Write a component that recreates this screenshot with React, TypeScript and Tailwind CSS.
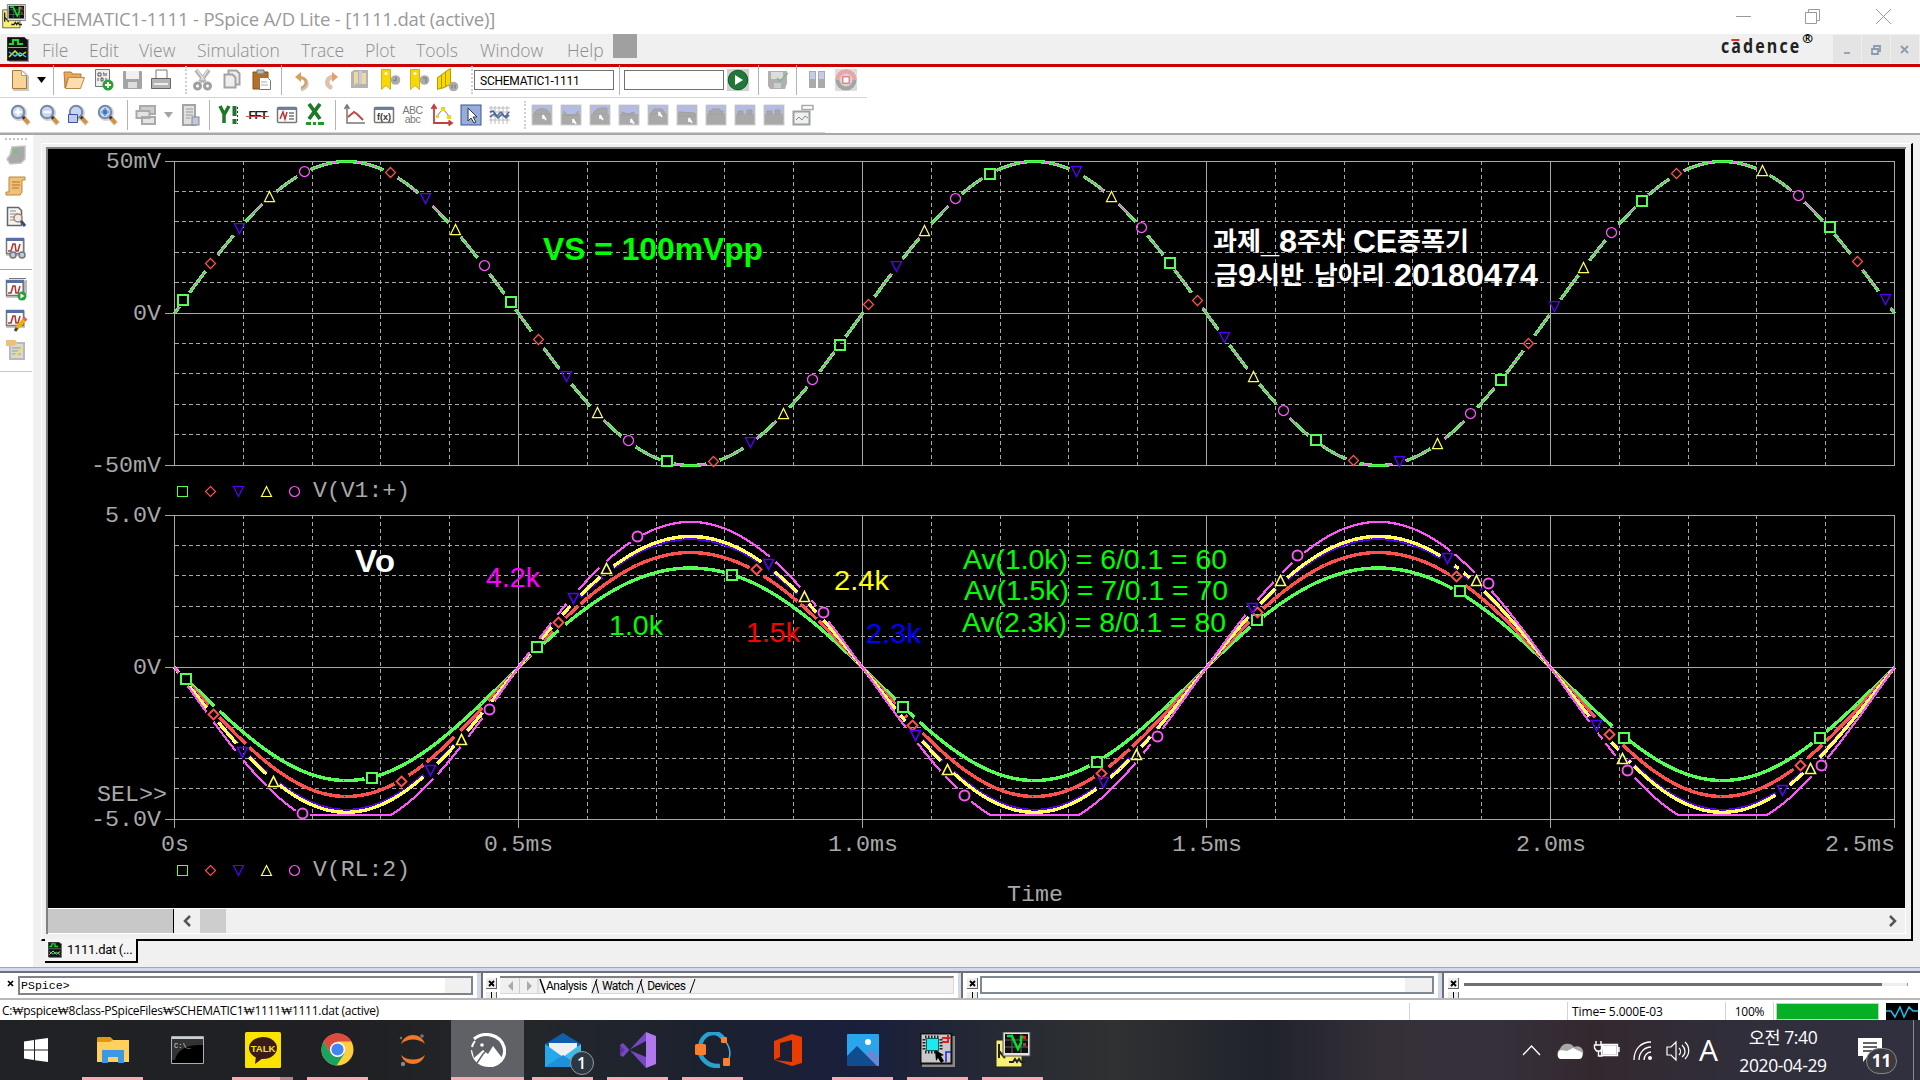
import React from "react";

type Pt = [number, number];
const GREEN = "#55ff55";
const RED = "#ff5050";
const BLUE = "#5500ff";
const YELLOW = "#ffff55";
const PINK = "#ff55ff";
const COLORS = [GREEN, RED, BLUE, YELLOW, PINK];
const X0 = 174.5;
const X1 = 1894.5;
const HALF = 172;

const phase = (x: number) => ((x - X0) / (2 * HALF)) * Math.PI;

const topY = (x: number) => 313.5 - 152 * Math.sin(phase(x));
const topXs = [
  [182.5, 510.7, 666.7, 839.6, 989.4, 1169.7, 1315, 1500.3, 1641.7, 1829],
  [210.5, 390.6, 538.2, 713.3, 868.2, 1197.8, 1353.2, 1528.3, 1676.5, 1857],
  [239, 425.4, 566.3, 750.3, 896.2, 1076.6, 1224.7, 1399.2, 1554.7, 1885.2],
  [269.4, 455.2, 597, 783, 924.9, 1111.4, 1253.9, 1437.4, 1583.3, 1762.9],
  [304.2, 484.4, 628.6, 812.6, 955.2, 1141.7, 1283.6, 1470.5, 1611.4, 1798.2],
];
const topMarks: Pt[][] = topXs.map((r) => r.map((x): Pt => [x, topY(x) - (x < 183 ? 3 : 1)]));

const botMarks: Pt[][] = [
  [[185, 678], [371, 777], [536.7, 646.7], [731, 574], [902, 706.7], [1096.3, 761.7], [1256, 619], [1459, 590], [1623, 737], [1819.7, 737]],
  [[213, 714], [401.6, 781.7], [558.4, 622.7], [756.3, 569.7], [912.2, 725.7], [1101.7, 773.3], [1257, 612], [1456.3, 576.7], [1609.7, 734.3], [1800.7, 765]],
  [[242.4, 752], [430.2, 770.3], [573.5, 598.3], [768.6, 564.3], [915.5, 735], [1103.2, 782.7], [1252.5, 608.7], [1447.3, 558.7], [1596.3, 725], [1782.3, 790]],
  [[273, 781], [461.2, 739.3], [606.5, 568.7], [804.5, 596], [947, 769], [1136.5, 754.3], [1280.4, 580.7], [1476.3, 580.7], [1622, 758], [1810.3, 768.7]],
  [[302.5, 813], [489, 709.3], [637, 536.3], [823.7, 612.7], [964.3, 795.3], [1157.6, 736.7], [1297.3, 555.3], [1488.3, 583.3], [1627.3, 770.7], [1821.3, 765.7]],
];

const outY = (up: number, down: number, clip: number) => (x: number) => {
  const s = Math.sin(phase(x));
  const a = (up + down) / 2;
  const b = (down - up) / 2;
  return 667.5 + Math.min(clip, a * s + b * s * s);
};
const outputs = [
  { y: outY(99.5, 113, 999), color: GREEN, w: 3.4 },
  { y: outY(115, 129, 999), color: RED, w: 3.4 },
  { y: outY(129, 143, 999), color: BLUE, w: 3.4 },
  { y: outY(131, 144.8, 999), color: YELLOW, w: 3.4 },
  { y: outY(145.6, 161, 147.5), color: PINK, w: 2.2 },
];

function tracePath(fn: (x: number) => number, marks: Pt[], gx: number, gy: number) {
  let d = "";
  let pen = false;
  for (let x = X0; x <= X1; x += 1) {
    const y = fn(x);
    const hidden = marks.some(([mx, my]) => Math.abs(x - mx) < gx && Math.abs(y - my) < gy);
    if (hidden) {
      pen = false;
      continue;
    }
    d += `${pen ? "L" : "M"}${x} ${y.toFixed(1)}`;
    pen = true;
  }
  return d;
}

function Marker({ kind, x, y, w = 1 }: { kind: number; x: number; y: number; w?: number }) {
  const cx = Math.round(x - 0.5) + 0.5;
  const cy = Math.round(y - 0.5) + 0.5;
  const p = { fill: "none", stroke: COLORS[kind], strokeWidth: w };
  if (kind === 0) return <rect x={cx - 5} y={cy - 5} width={10} height={10} {...p} shapeRendering="crispEdges" />;
  if (kind === 1) return <path d={`M${cx} ${cy - 5}l5 5l-5 5l-5-5z`} {...p} />;
  if (kind === 2) return <path d={`M${cx - 5} ${cy - 5}h10l-5 10z`} {...p} />;
  if (kind === 3) return <path d={`M${cx - 5} ${cy + 5}h10l-5-10z`} {...p} />;
  return <circle cx={cx} cy={cy} r={5} {...p} />;
}

function Grid({ top, ticks }: { top: number; ticks?: boolean }) {
  const out: React.ReactElement[] = [];
  for (let i = 0; i <= 25; i++) {
    const x = Math.floor(X0 + i * 68.8) + 0.5;
    const major = i % 5 === 0;
    out.push(<path key={`v${i}`} d={`M${x} ${top}V${top + 304 + (ticks && major ? 9 : 0)}`} strokeDasharray={major ? undefined : "4 3"} />);
  }
  for (let j = 0; j <= 10; j++) {
    const y = Math.floor(top + j * 30.4) + 0.5;
    const major = j % 5 === 0;
    out.push(<path key={`h${j}`} d={`M${major ? 165 : X0} ${y}H${X1}`} strokeDasharray={major ? undefined : "4 3"} />);
  }
  return <g stroke="#a8a8a8" fill="none" shapeRendering="crispEdges">{out}</g>;
}

function T({ x, e, y, s, c, b, children }: { x: number; e: number; y: number; s: number; c?: string; b?: boolean; children: string }) {
  return (
    <text x={x} y={y} fontSize={s} fill={c ?? "#a8a8a8"} fontWeight={b ? 700 : 400} textLength={e - x} lengthAdjust="spacingAndGlyphs">
      {children}
    </text>
  );
}

function Chart() {
  const allTop = topMarks.flat();
  const allBot = botMarks.flat();
  const topD = tracePath(topY, allTop, 6.2, 7);
  return (
    <svg viewBox="48 149 1857 759" className="block h-[759px] w-[1857px] bg-black">
      <Grid top={161} />
      <Grid top={515} ticks />
      <g fill="none" shapeRendering="crispEdges">
        <path d={topD} stroke={GREEN} strokeWidth={3.4} />
        <path d={topD} stroke="#e070e0" strokeWidth={1} />
        {outputs.map((o, i) => (
          <path key={i} d={tracePath(o.y, allBot, 6.5, 7.5)} stroke={o.color} strokeWidth={o.w} />
        ))}
      </g>
      {topMarks.map((r, k) => r.map(([x, y], i) => <Marker key={`${k}-${i}`} kind={k} x={x} y={y} w={k === 0 ? 2 : 1.25} />))}
      {botMarks.map((r, k) => r.map(([x, y], i) => <Marker key={`${k}-${i}`} kind={k} x={x} y={y} w={k === 0 ? 2 : k === 1 || k === 4 ? 1.9 : 1.6} />))}
      {[491, 870].map((y) => [0, 1, 2, 3, 4].map((k) => <Marker key={`${y}${k}`} kind={k} x={182.5 + k * 28} y={y + 0.5} w={k === 0 ? 1 : 1.2} />))}
      <g fontFamily="'Liberation Mono', monospace">
        <T x={106} e={161} y={168} s={22.5}>50mV</T>
        <T x={133} e={161} y={320} s={22.5}>0V</T>
        <T x={91} e={161} y={472} s={22.5}>-50mV</T>
        <T x={105} e={161} y={522} s={22.5}>5.0V</T>
        <T x={133} e={161} y={674} s={22.5}>0V</T>
        <T x={97} e={167} y={801} s={22.5}>SEL&gt;&gt;</T>
        <T x={91} e={161} y={826} s={22.5}>-5.0V</T>
        <T x={161} e={189} y={851} s={22.5}>0s</T>
        <T x={484} e={553} y={851} s={22.5}>0.5ms</T>
        <T x={828} e={898} y={851} s={22.5}>1.0ms</T>
        <T x={1172} e={1242} y={851} s={22.5}>1.5ms</T>
        <T x={1516} e={1586} y={851} s={22.5}>2.0ms</T>
        <T x={1825} e={1895} y={851} s={22.5}>2.5ms</T>
        <T x={313} e={410} y={497} s={22.5}>V(V1:+)</T>
        <T x={313} e={410} y={876} s={22.5}>V(RL:2)</T>
        <T x={1007} e={1063} y={901} s={22.5}>Time</T>
      </g>
      <g fontFamily="'Liberation Sans', sans-serif">
        <T x={543} e={763} y={260} s={32} c="#00ff00" b>VS = 100mVpp</T>
        <T x={1261} e={1297} y={252} s={31} c="#fff" b>_8</T>
        <T x={1353} e={1397} y={252} s={31} c="#fff" b>CE</T>
        <T x={1238} e={1256} y={286} s={31} c="#fff" b>9</T>
        <T x={1394} e={1538} y={286} s={31} c="#fff" b>20180474</T>
        <T x={355} e={395} y={572} s={31} c="#fff" b>Vo</T>
        <T x={486} e={540} y={587} s={28} c="#ff00ff">4.2k</T>
        <T x={834} e={889} y={590} s={28} c="#ffff00">2.4k</T>
        <T x={609} e={663} y={635} s={28} c="#00ff00">1.0k</T>
        <T x={746} e={800} y={642} s={28} c="#ff0000">1.5k</T>
        <T x={866} e={921} y={643} s={28} c="#0000ff">2.3k</T>
        <T x={963} e={1227} y={569} s={28} c="#00ff00">Av(1.0k) = 6/0.1 = 60</T>
        <T x={964} e={1228} y={600} s={28} c="#00ff00">Av(1.5k) = 7/0.1 = 70</T>
        <T x={962} e={1226} y={632} s={28} c="#00ff00">Av(2.3k) = 8/0.1 = 80</T>
      </g>
      <g fontFamily="'Noto Sans CJK KR', sans-serif">
        <T x={1213} e={1261} y={250} s={25} c="#fff" b>과제</T>
        <T x={1297} e={1345} y={250} s={25} c="#fff" b>주차</T>
        <T x={1397} e={1469} y={250} s={25} c="#fff" b>증폭기</T>
        <T x={1214} e={1238} y={284} s={25} c="#fff" b>금</T>
        <T x={1256} e={1304} y={284} s={25} c="#fff" b>시반</T>
        <T x={1314} e={1385} y={284} s={25} c="#fff" b>남아리</T>
      </g>
    </svg>
  );
}

/* ---------- toolbar icons, drawn on a 24x24 canvas ---------- */
function Ico({ children, w = "w-[29px]" }: { children: React.ReactNode; w?: string }) {
  return (
    <div className={`${w} flex shrink-0 items-center justify-center`}>
      <svg viewBox="0 0 24 24" className="h-6 w-6 shrink-0" fill="none">
        {children}
      </svg>
    </div>
  );
}
const Sep = ({ w }: { w: string }) => (
  <div className={`${w} flex shrink-0 justify-center`}>
    <div className="h-[30px] w-px bg-[#b4b4b4]" />
  </div>
);
const Dots = ({ w }: { w: string }) => (
  <div className={`${w} flex shrink-0 justify-end pr-px`}>
    <div className="h-[28px] border-l-2 border-dotted border-[#d0d0d0]" />
  </div>
);
const Caret = ({ c }: { c: string }) => (
  <div className="flex w-[14px] shrink-0 justify-center">
    <svg viewBox="0 0 9 6" className="h-[6px] w-[9px]"><path d="M0 0h9L4.500 6z" fill={c} /></svg>
  </div>
);

const Lens = ({ inner }: { inner?: React.ReactNode }) => (
  <Ico>
    <circle cx="10" cy="10" r="8" fill="#d4d4d4" />
    <path d="M13 13l7 8" stroke="#c8c8c8" strokeWidth="5" />
    <path d="M13.500 13.500l6 6.500" stroke="#d89030" strokeWidth="3.500" />
    <path d="M12.500 12.500l3 3" stroke="#334" strokeWidth="3" />
    <circle cx="9" cy="9" r="6.200" fill="#c4d8f4" stroke="#7888a4" strokeWidth="2" />
    {inner}
  </Ico>
);
const Bookmark = ({ kind }: { kind: number }) => (
  <Ico>
    {kind < 2 ? (
      <>
        <path d="M4.500 1.500h9v20L9 17.500l-4.500 4z" fill="#f8d800" stroke="#c8b030" />
        <circle cx="9" cy="5.500" r="1.500" fill="#fff" />
      </>
    ) : (
      <>
        <path d="M2.500 9.500l5-3v13l-5 2z" fill="#f8d800" stroke="#b89800" />
        <path d="M6.500 6.500l5-3v15l-5 2z" fill="#f8d800" stroke="#b89800" />
        <path d="M10.500 3.500l5-3v16l-5 2z" fill="#f8d800" stroke="#b89800" />
      </>
    )}
    <circle cx="18.500" cy={kind === 2 ? 18.500 : 12} r="4.800" fill="#acacac" />
    <path d={kind === 0 ? "M19 9v3.500h-3" : kind === 1 ? "M17 10h3v5" : "M17 16.500v4M20 16.500v4"} stroke="#888" strokeWidth="1.500" />
  </Ico>
);
const Plotbox = ({ d, cur }: { d: string; cur?: Pt }) => (
  <Ico>
    <rect x="1.500" y="1.500" width="21" height="21" fill="#d0d0d0" />
    <rect x="2.500" y="2.500" width="19" height="19" fill="#a9a9a9" />
    <path d="M3 3h18v8H3z" fill="#b4bce4" />
    <path d={d} fill="#a9a9a9" stroke="#a0a0a0" />
    {cur && <path d={`M${cur[0]} ${cur[1]}l3 5M${cur[0]} ${cur[1]}v4`} stroke="#fff" strokeWidth="1.600" />}
  </Ico>
);
const Card = ({ children }: { children: React.ReactNode }) => (
  <Ico>
    <rect x="2.500" y="4.500" width="19" height="15" rx="1" fill="#fff" stroke="#777" strokeWidth="1.500" />
    <path d="M3 6h18" stroke="#6b80b0" strokeWidth="2" />
    {children}
  </Ico>
);

function Toolbars() {
  return (
    <div className="h-[66px] w-full bg-white">
      <div className="flex h-[31px] w-[867px] items-center border-b border-[#d4d4d4] pb-[5px] pl-[5px]">
        <Ico><path d="M5 3h11l5 5v15H5z" fill="#c8c8c8" /><path d="M4.500 2.500h9l5 5v13h-14z" fill="#f8d498" stroke="#a87838" /><path d="M13.500 2.500v5h5" fill="#fff" stroke="#c89850" /></Ico>
        <Caret c="#000" />
        <Sep w="w-[11px]" />
        <Ico><path d="M2 4h7l2 2h8v4H6L3 20z" fill="#e8a858" stroke="#b87838" /><path d="M6.500 9.500h16l-4 11h-15z" fill="#fddcb0" stroke="#b88848" /></Ico>
        <Ico><path d="M4.500 1.500h14v17h-14z" fill="#eee" stroke="#777" /><path d="M7 5h3v3H7zM12 5h1v3M15 5v3M7 10v3M10 10h2v3h-2zM15 10v3" stroke="#555" /><circle cx="17" cy="17" r="5.500" fill="#28a038" /><path d="M17 14v6M14 17h6" stroke="#fff" strokeWidth="1.800" /></Ico>
        <Ico><rect x="3" y="3" width="19" height="18" rx="1" fill="#a4a4a4" /><path d="M6 3h13v8H6z" fill="#f0f0f0" /><path d="M8 14h9v6H8z" fill="#ddd" /></Ico>
        <Ico><path d="M7 2h11v9H7z" fill="#fff" stroke="#777" /><path d="M2.500 10.500h19v10h-19z" fill="#b4b4b4" stroke="#666" /><path d="M5 16h14" stroke="#eee" strokeWidth="2" /></Ico>
        <Dots w="w-[13px]" />
        <Ico><path d="M5 2l9 12M18 2l-9 12" stroke="#b4b4b4" strokeWidth="4" /><path d="M6 2l7 10M17 2l-7 10" stroke="#e8e8e8" strokeWidth="1.200" /><circle cx="6.500" cy="18" r="3" stroke="#a0a0a0" strokeWidth="3" /><circle cx="16.500" cy="18" r="3" stroke="#a0a0a0" strokeWidth="3" /></Ico>
        <Ico><path d="M8.500 2.500h8l3 3v11h-11z" fill="#eee" stroke="#a4a4a4" strokeWidth="2" /><path d="M4.500 6.500h8l3 3v10h-11z" fill="#eee" stroke="#a4a4a4" strokeWidth="2" /></Ico>
        <Ico><path d="M4 4h15v17H4z" fill="#b87020" stroke="#855018" /><path d="M8 2h7v4H8z" fill="#bbb" stroke="#777" /><path d="M10.500 9.500h8l3 3v9h-11z" fill="#fff" stroke="#777" /><path d="M12 14h6M12 17h7" stroke="#aaa" /></Ico>
        <Sep w="w-[12px]" />
        <Ico><path d="M11 22c9-3 8-12-2-12" stroke="#c8c8c8" strokeWidth="3" /><path d="M11 20c7-3 6-10-1-11" stroke="#d8a060" strokeWidth="2.500" /><path d="M11 4v10L5 9z" fill="#d8a060" /></Ico>
        <Ico><path d="M13 20c-7-3-6-10 1-11" stroke="#c8c8c8" strokeWidth="4.500" /><path d="M13 20c-7-3-6-10 1-11" stroke="#ecc090" strokeWidth="2.500" /><path d="M13 4v10l6-5z" fill="#e0a070" /></Ico>
        <Ico><path d="M3 4l3-2h14v18H3z" fill="#b4b4b4" /><path d="M6 4h4v12l-2-1-2 3zM14 5h4v11h-4z" fill="#f0d8a0" /><path d="M11 3h3v13h-3z" fill="#c4cce0" /></Ico>
        <Bookmark kind={0} />
        <Bookmark kind={1} />
        <Bookmark kind={2} />
        <Dots w="w-[13px]" />
        <div className="flex h-5 w-[140px] shrink-0 items-center border border-[#707070] pl-[5px] pt-[2px] font-['Roboto'] text-[12px] tracking-[-0.25px] text-black">SCHEMATIC1-1111</div>
        <Sep w="w-[10px]" />
        <div className="h-5 w-[100px] shrink-0 border border-[#707070]" />
        <Ico w="w-[28px]"><rect x="1" y="1" width="22" height="22" fill="#d0d0d0" /><circle cx="12" cy="12" r="9.800" fill="#207838" stroke="#145828" /><path d="M9 7l8 5-8 5z" fill="#fff" /></Ico>
        <Sep w="w-[12px]" />
        <Ico w="w-[27px]"><path d="M2 3h19v12l-2 6H4l-2-3z" fill="#b0b0b0" /><path d="M5 4h12v7H5z" fill="#ddd" /><path d="M8 15h7v5H8z" fill="#ccc" /><path d="M11 10l3 3 8-8" stroke="#80b880" strokeWidth="1.400" /></Ico>
        <Sep w="w-[11px]" />
        <Ico><path d="M4 3h7v17H4zM13 3h7v17h-7z" fill="#aaa" /><path d="M5 4h5v7H5zM14 4h5v7h-5z" fill="#c4cce8" /></Ico>
        <Ico><rect x="1" y="1" width="22" height="22" fill="#ddd" /><circle cx="12" cy="12" r="10.500" fill="#a4a4a4" /><path d="M1.500 12a10.500 10.500 0 0121 0z" fill="#eca4a4" /><circle cx="12" cy="12" r="6.500" fill="#d4d4d4" /><rect x="8" y="8" width="8" height="8" fill="#e08888" /><rect x="9.500" y="9.500" width="5" height="5" fill="#fff" /></Ico>
      </div>
      <div className="flex h-[35px] w-[825px] items-center border-b border-[#d4d4d4] pl-[6px]">
        <Lens inner={<path d="M9 5.500v7M5.500 9h7" stroke="#fff" strokeWidth="2.400" />} />
        <Lens inner={<path d="M5.500 9h7" stroke="#fff" strokeWidth="2.400" />} />
        <Lens inner={<path d="M1.500 11.500h9v8h-9z" stroke="#4050a0" fill="#c0ccec" />} />
        <Lens inner={<path d="M9 5v8M5 9h8M7 7l4 4M11 7l-4 4" stroke="#3878b8" strokeWidth="1.200" />} />
        <Sep w="w-[10px]" />
        <Ico><path d="M5 3h15v8H5z" fill="#ccc" stroke="#aaa" strokeWidth="2" /><path d="M1.500 8h13v7h-13zM7 14h13v7H7z" fill="#e4e4e4" stroke="#aaa" strokeWidth="2" /></Ico>
        <Caret c="#a4a4a4" />
        <Ico><path d="M5 2h12v20H5z" fill="#e0e0e0" stroke="#a4a4a4" strokeWidth="2" /><path d="M8 6h7M8 9h7M8 12h7M8 15h4" stroke="#999" /><rect x="14" y="14" width="7" height="8" fill="#c0c8e0" stroke="#888" /></Ico>
        <Sep w="w-[10px]" />
        <Ico><path d="M3 3l4 8v9M12 3L7 12" stroke="#1d7a26" strokeWidth="3.500" /><path d="M17.500 3v10M17.500 16v5" stroke="#1d7a26" strokeWidth="4" /><path d="M20.500 4v17" stroke="#333" strokeDasharray="2 2" /></Ico>
        <div className="flex w-[29px] shrink-0 justify-center font-['Liberation_Sans'] text-[11.500px] font-bold tracking-[-1px] text-[#222]"><span className="relative leading-[11px]">FFT<span className="absolute -left-[2px] top-[6px] h-px w-[23px] bg-[#c05050]" /></span></div>
        <Card><path d="M5 16l3-7 2 7 2-7" stroke="#c03030" strokeWidth="1.500" /><path d="M14 10h5M14 13h5M14 16h5" stroke="#333" /></Card>
        <Ico><path d="M5 1l11 15M16 1L5 16" stroke="#1d7a26" strokeWidth="3.800" /><path d="M2 20.500h5M9 20.500h3M14 20.500h6" stroke="#1d9a26" strokeWidth="3" /></Ico>
        <Sep w="w-[10px]" />
        <Ico><path d="M4 2v18h18M1.500 6L4 2l2.500 4" stroke="#777" strokeWidth="1.500" /><path d="M5 14l6-5 3 2 6 6" stroke="#c04848" strokeWidth="2" /></Ico>
        <Card><text x="5" y="17" fontSize="9" fontWeight="700" fill="#333" fontFamily="Liberation Sans">f(x)</text></Card>
        <div className="w-[29px] shrink-0 text-center font-['Liberation_Sans'] text-[10.500px] leading-[9px] tracking-[-0.5px] text-[#777]">ABC<br />abc</div>
        <Ico><path d="M4 3v17h18M1.500 6L4 2l2.500 4M18.500 17.500L22 20l-3.500 2.500" stroke="#c04040" strokeWidth="1.800" /><path d="M6 14l7-8 7 8" stroke="#777" /><path d="M11 4h4v4h-4zM6 12h3v3H6zM17 12h4v4h-4z" fill="#f0d800" /></Ico>
        <Ico><rect x="2" y="2" width="20" height="20" fill="#98acdc" stroke="#3c5490" /><path d="M9 5v13l3-3 3 5 2-1-3-5h4z" fill="#fff" stroke="#334" /></Ico>
        <Ico><path d="M3 3v18M7 3v18M11 3v18M15 3v18M19 3v18M1 5h21M1 9h21M1 13h21M1 17h21" stroke="#bbb" /><path d="M2 9l3-1 4 5 4-4 4 5 4-5M2 14l4-3 4 4 4-4 4 4 3-3" stroke="#4868a0" strokeWidth="1.500" /></Ico>
        <Dots w="w-[13px]" />
        <Plotbox d="M4 11c2-7 14-7 16 0z" cur={[13, 12]} />
        <Plotbox d="M5 8c2 6 12 6 14 0v4H5z" cur={[14, 16]} />
        <Plotbox d="M5 11c3-7 9-6 14-6v6z" cur={[12, 12]} />
        <Plotbox d="M5 9l6 2 6-2v3H5z" cur={[14, 16]} />
        <Plotbox d="M4 11l4-5h8l4 5z" cur={[13, 9]} />
        <Plotbox d="M4 9l16 1v3H4z" cur={[14, 15]} />
        <Plotbox d="M5 11V8h3V6h8v2h3v3z" />
        <Plotbox d="M5 11V8h5v3zM14 11V7h5v4z" />
        <Plotbox d="M5 11V8h5v3zM13 11V7h5v4z" />
        <Ico><rect x="2.500" y="8.500" width="16" height="13" fill="#f0f0f0" stroke="#a0a0a0" strokeWidth="2" /><path d="M11 2.500h11v4H11z" fill="#fff" stroke="#aaa" strokeWidth="1.500" /><path d="M5 17l3-3 3 3 3-4 3 2" stroke="#70a070" /></Ico>
      </div>
    </div>
  );
}

const MiniPlot = ({ children }: { children: React.ReactNode }) => (
  <Ico>
    <rect x="2" y="3" width="19" height="17" fill="#c8c8c8" />
    <rect x="2.500" y="2.500" width="17" height="15" fill="#fff" stroke="#777" strokeWidth="1.500" />
    <path d="M2 3.500h18" stroke="#5870a0" strokeWidth="3" />
    <path d="M4 15h3l2-7h2l1 7h2l2-7" stroke="#b03838" strokeWidth="1.600" />
    {children}
  </Ico>
);

function SideBar() {
  return (
    <div className="flex w-[33px] shrink-0 flex-col items-center bg-white pr-[2px] pt-[3px]">
      <div className="w-[22px] border-t-2 border-dotted border-[#c4c4c4]" />
      <div className="mt-[3px] flex flex-col gap-[7px]">
        <Ico><path d="M8 4l13-1v13l-4 4-11 1-3-5 3-4z" fill="#a8a8a8" stroke="#c4c4c4" strokeWidth="1.500" /><path d="M10 10l3-3" stroke="#60d060" strokeWidth="2" /></Ico>
        <Ico><path d="M5 3h16v3h-3v12l-2 3H2v-3h3z" fill="#f0c078" stroke="#b88838" /><path d="M8 8h8M8 11h8M8 14h7" stroke="#a87830" /></Ico>
        <Ico><path d="M3.500 2.500h11l3 3v15h-14z" fill="#f4f4f4" stroke="#666" strokeWidth="1.500" /><path d="M6 6h6M6 9h8M6 12h5M6 15h6" stroke="#888" /><circle cx="14" cy="13" r="4" fill="#e0ecf8" stroke="#c08048" strokeWidth="1.500" /><path d="M17 16l4 5" stroke="#38507a" strokeWidth="3" /></Ico>
        <MiniPlot><circle cx="9" cy="19" r="3" fill="#b8c8e8" stroke="#777" strokeWidth="1.500" /><circle cx="18" cy="19" r="3" fill="#b8c8e8" stroke="#777" strokeWidth="1.500" /></MiniPlot>
      </div>
      <div className="mt-[9px] h-px w-[32px] bg-[#a8a8a8]" />
      <div className="mt-[8px] flex flex-col gap-[6px]">
        <MiniPlot><path d="M19 4v14M22 2v14M5 .5h17" stroke="#777" /><circle cx="18" cy="18" r="4.500" fill="#28a038" /><path d="M16.500 15.500l4 2.500-4 2.500z" fill="#fff" /></MiniPlot>
        <MiniPlot><path d="M12 21l9-10" stroke="#f0b000" strokeWidth="4" /><path d="M11 23l2-3" stroke="#444" strokeWidth="3" /><path d="M20 12l2-2" stroke="#e06060" strokeWidth="4" /></MiniPlot>
        <Ico><path d="M6 5h14v16H6z" fill="#d8d8d8" stroke="#b8b8b8" strokeWidth="2" /><path d="M2 2h9l3 3-4 3H2z" fill="#f0c078" /><path d="M8 10h9M8 13h8M8 16h9" stroke="#999" /><path d="M11 18l8-9" stroke="#f0e060" strokeWidth="2" /></Ico>
      </div>
      <div className="mt-[9px] h-px w-[33px] bg-[#c8c8c8]" />
    </div>
  );
}

function AppIcon({ cls }: { cls: string }) {
  return (
    <svg viewBox="0 0 36 36" className={cls}>
      <path d="M1 8h26v27H1z" fill="#f8f070" stroke="#222" />
      <path d="M4 12v14M4 19l6 7M14 30h4l2-3 2 3 2-3 2 3h4" stroke="#222" strokeWidth="2" fill="none" />
      <path d="M8 0h27v24H8z" fill="#e4e4e4" stroke="#555" />
      <path d="M10 2h23v19H10z" fill="#111" />
      <path d="M10 8h23M10 15h23M17 2v19M26 2v19" stroke="#666" />
      <path d="M12 4h5l3 7 3 6 3-6V5h3" stroke="#00e030" strokeWidth="2.500" fill="none" />
      <path d="M28 4h3v3h-3zM28 11h3v3h-3z" fill="#f02020" />
    </svg>
  );
}
const DocIcon = ({ cls }: { cls: string }) => (
  <svg viewBox="0 0 22 25" className={cls}>
    <path d="M2 2h20v23H2z" fill="#999" />
    <path d="M.5.5h17l3 3v20H.5z" fill="#111" stroke="#333" />
    <path d="M2 7h4V3h5v4h5" stroke="#10e030" strokeWidth="2" fill="none" />
    <path d="M1 10.500h19" stroke="#999" />
    <path d="M2 20l6-6 5 5 6-4" stroke="#f0e020" strokeWidth="1.500" fill="none" />
    <path d="M2 15l6 4 5-3 6 4" stroke="#20d0f0" strokeWidth="1.500" fill="none" />
  </svg>
);

function Header() {
  const menu: [string, string][] = [
    ["File", "w-[47px]"], ["Edit", "w-[50px]"], ["View", "w-[58px]"], ["Simulation", "w-[104px]"], ["Trace", "w-[64px]"],
    ["Plot", "w-[51px]"], ["Tools", "w-[64px]"], ["Window", "w-[87px]"], ["Help", "w-[47px]"],
  ];
  return (
    <>
      <div className="flex h-[34px] items-center bg-white">
        <AppIcon cls="ml-[2px] -mt-[2px] h-[25px] w-[24px]" />
        <span className="ml-[5px] mt-[3px] w-[470px] whitespace-nowrap font-['Open_Sans'] text-[18.500px] tracking-[-0.170px] text-[#999]">SCHEMATIC1-1111 - PSpice A/D Lite - [1111.dat (active)]</span>
        <svg viewBox="0 0 160 20" className="ml-auto mr-[26px] h-5 w-[160px]" fill="none" stroke="#999">
          <path d="M2 9.500h15M71.500 5.500h11v11h-11zM74.500 5V2.500h11v11H83M142 2l15 15M157 2l-15 15" />
        </svg>
      </div>
      <div className="flex h-[30px] items-center bg-[#f0f0f0]">
        <DocIcon cls="ml-[7px] mr-[13px] h-[25px] w-[22px]" />
        {menu.map(([m, w]) => (
          <span key={m} className={`${w} shrink-0 whitespace-nowrap pt-[2px] font-['Open_Sans'] text-[17.500px] font-light text-[#8c8c8c]`}>{m}</span>
        ))}
        <div className="-mt-[6px] ml-[-1px] h-[24px] w-[24px] bg-[#a0a0a0]" />
        <div className="ml-auto flex h-full items-start">
          <div className="mt-[-3px] whitespace-nowrap font-['Open_Sans'] text-[20px] font-bold tracking-[2.6px] text-[#222]">
            <span className="inline-block origin-left scale-x-[0.8]">c<span className="relative">a<span className="absolute left-[0px] top-[7px] h-[2px] w-[10px] bg-[#e03030]" /></span>dence</span>
          </div>
          <span className="-ml-[19px] mr-[20px] mt-[-5px] font-['Open_Sans'] text-[13px] font-bold text-black">®</span>
          {["M3 10h6", "M2 6h6v5H2zM4 6V3h6v5H8", "M2 3l7 7M9 3l-7 7"].map((d) => (
            <div key={d} className="mr-px mt-px flex h-7 w-7 items-center justify-center bg-[#e4e4e4]">
              <svg viewBox="0 0 12 12" className="h-3 w-3" fill="none" stroke="#8c9cb0" strokeWidth="1.800"><path d={d} /></svg>
            </div>
          ))}
        </div>
      </div>
      <div className="h-[3px] bg-[#cc0000]" />
    </>
  );
}

function MdiArea() {
  return (
    <div className="flex h-[834px] border-t-2 border-[#a8a8a8]">
      <SideBar />
      <div className="flex flex-1 flex-col bg-[#f0f0f0] pl-[8px] pt-[8px]">
        <div className="flex h-[798px] w-[1872px] flex-col border-b-2 border-l border-r-2 border-t border-b-black border-l-white border-r-black border-t-white pl-[4px] pt-[3px]">
          <div className="flex w-[1860px] flex-col border-l-2 border-t-2 border-[#808080]">
            <Chart />
            <div className="flex h-[26px] w-[1858px] items-stretch border-b border-r border-t border-white">
              <div className="w-[125px] bg-[#c8c8c8]" />
              <div className="w-px bg-black" />
              <div className="flex w-[26px] items-center justify-center">
                <svg viewBox="0 0 10 12" className="h-3 w-[10px]" fill="none" stroke="#555" strokeWidth="2.500"><path d="M8 1L3 6l5 5" /></svg>
              </div>
              <div className="w-[26px] bg-[#cdcdcd]" />
              <div className="ml-auto flex w-[24px] items-center justify-center">
                <svg viewBox="0 0 10 12" className="h-3 w-[10px]" fill="none" stroke="#555" strokeWidth="2.500"><path d="M2 1l5 5-5 5" /></svg>
              </div>
            </div>
          </div>
        </div>
        <div className="-mt-[2px] ml-[4px] flex h-[24px] w-[93px] items-center border-b-2 border-r-2 border-black bg-[#f4f4f4] pl-[3px]">
          <DocIcon cls="h-[16px] w-[14px]" />
          <span className="ml-[5px] whitespace-nowrap font-['Roboto'] text-[13px] tracking-[-0.3px] text-black">1111.dat (...</span>
        </div>
      </div>
    </div>
  );
}

const CloseBox = () => (
  <div className="flex w-[11px] shrink-0 flex-col gap-[3px] pt-[5px]">
    <div className="flex h-[11px] items-center justify-center border-b border-r border-[#666] bg-[#eee]">
      <svg viewBox="0 0 7 7" className="h-[7px] w-[7px]" stroke="#000" strokeWidth="1.800"><path d="M1 1l5 5M6 1L1 6" /></svg>
    </div>
    <div className="flex h-[6px] justify-center border-r border-[#666] bg-[#eee]"><div className="h-full w-px bg-black" /></div>
  </div>
);
const Split = ({ w }: { w: string }) => <div className={`${w} shrink-0 border-r-2 border-[#707070] bg-[#d0d8ec]`} />;

function Docks() {
  return (
    <>
      <div className="h-[5px] border-b-2 border-[#707070] bg-[#d0d8ec]" />
      <div className="flex h-[25px] overflow-hidden bg-white">
        <div className="flex w-[477px] shrink-0 items-start">
          <svg viewBox="0 0 7 7" className="ml-[7px] mr-[4px] mt-[7px] h-[7px] w-[7px]" stroke="#000" strokeWidth="1.700"><path d="M1 1l5 5M6 1L1 6" /></svg>
          <div className="mt-[3px] flex h-[19px] w-[455px] items-center justify-between border-2 border-[#808488] pl-[1px] font-['Liberation_Mono'] text-[11.600px] text-black">
            PSpice&gt;<div className="h-[15px] w-[26px] bg-[#f0f0f0]" />
          </div>
        </div>
        <Split w="w-[6px]" />
        <div className="flex w-[475px] shrink-0 pl-[3px]">
          <CloseBox />
          <div className="ml-[3px] mt-[3px] flex h-[18px] w-[454px] items-center border-b border-r border-t-2 border-[#d8d8d8] border-t-[#808080] bg-[#f0f0f0]">
            <svg viewBox="0 0 54 16" className="h-[16px] w-[54px] shrink-0"><path d="M13 3v10L8 8zM27 3v10l5-5z" fill="#aaa" /><path d="M19.500 0v16M38 0v16" stroke="#ccc" /><path d="M40 1l5 14h9V1z" fill="#fff" /><path d="M40 1l5 14" stroke="#000" strokeWidth="1.500" /></svg>
            <div className="-ml-[8px] flex items-center font-['Roboto'] text-[12px] tracking-[-0.5px] text-black">
              <span className="h-[16px] bg-white pr-[4px] leading-[17px]">Analysis</span>
              <svg viewBox="0 0 8 16" className="h-4 w-2" stroke="#000" fill="none"><path d="M1 15L6 1M4.500 3l3 12" /></svg>
              <span className="mx-[3px]">Watch</span>
              <svg viewBox="0 0 8 16" className="h-4 w-2" stroke="#000" fill="none"><path d="M1 15L6 1M4.500 3l3 12" /></svg>
              <span className="mx-[3px]">Devices</span>
              <svg viewBox="0 0 8 16" className="h-4 w-2" stroke="#000" fill="none"><path d="M2 15L7 1" /></svg>
            </div>
          </div>
        </div>
        <Split w="w-[5px]" />
        <div className="flex w-[475px] shrink-0 pl-[4px]">
          <CloseBox />
          <div className="ml-[2px] mt-[3px] flex h-[18px] w-[454px] justify-end border-2 border-[#808890]"><div className="w-[27px] bg-[#f0f0f0]" /></div>
        </div>
        <Split w="w-[6px]" />
        <div className="flex pl-[4px]">
          <CloseBox />
          <div className="ml-[5px] mt-[10px] h-[3px] w-[418px] bg-[#707070]" />
          <div className="mt-[10px] h-[3px] w-[26px] border-r border-[#999] bg-[#eee]" />
        </div>
      </div>
      <div className="flex h-[22px] items-end border-t-2 border-[#b8b8b8] bg-white font-['Open_Sans'] text-[12px] tracking-[-0.270px] text-black">
        <span className="w-[1409px] self-center whitespace-nowrap pl-[2px] pt-[2px]">C:₩pspice₩8class-PSpiceFiles₩SCHEMATIC1₩1111₩1111.dat (active)</span>
        <span className="h-[17px] w-[158px] border-l border-[#d4d4d4]" />
        <span className="h-[18px] w-[158px] whitespace-nowrap border-l border-[#d4d4d4] pl-[4px] leading-[19px] tracking-[-0.1px]">Time= 5.000E-03</span>
        <span className="h-[18px] w-[49px] border-l border-r border-[#d4d4d4] text-center leading-[19px]">100%</span>
        <div className="ml-[2px] mr-[7px] h-[17px] w-[103px] border border-[#ccc] bg-[#06b025]" />
        <svg viewBox="0 0 32 17" className="h-[17px] w-8 bg-black" fill="none" stroke="#20c0f0" strokeWidth="1.500"><path d="M0 8h5l4 6 5-10 4 10 5-10 4 4h5" /></svg>
      </div>
    </>
  );
}

function Task({ children, bar = true, active, dim }: { children: React.ReactNode; bar?: boolean; active?: boolean; dim?: boolean }) {
  return (
    <div className="flex h-full w-[75px] shrink-0 justify-center">
      <div className={`flex h-full flex-col items-center ${active ? "w-[73px] bg-[#5f6166]" : "w-[61px]"}`}>
        <div className="flex h-[57px] items-center justify-center pt-[2px]">{children}</div>
        {bar && <div className="flex h-[3px] w-full bg-[#fbaab2]">{dim && <div className="ml-auto h-full w-[13px] bg-[#b88088]" />}</div>}
      </div>
    </div>
  );
}

function Taskbar() {
  return (
    <div className="flex h-[60px] items-stretch bg-[linear-gradient(90deg,#202226_0%,#202024_18%,#23272a_28%,#1c2130_37%,#191f3c_45%,#262a33_52%,#2f3132_58%,#20232c_66%,#353038_72%,#35303b_78%,#34282f_83%,#302e3a_90%,#30303f_100%)]">
      <div className="flex w-[75px] items-center justify-center pr-[3px]">
        <svg viewBox="0 0 24 24" className="h-6 w-6" fill="#fff"><path d="M0 3.500L10 2v9.500H0zM11 1.800L24 0v11.500H11zM0 12.500h10V22L0 20.500zM11 12.500h13V24l-13-1.800z" /></svg>
      </div>
      <Task><svg viewBox="0 0 32 28" className="h-7 w-8"><path d="M0 3a2 2 0 012-2h11l3 3h16v22H0z" fill="#ffd05c" /><path d="M0 3a2 2 0 012-2h11l3 3-3 2H0z" fill="#e09810" /><path d="M5 14h22v13h-6v-6H11v6H5z" fill="#3c98e4" /></svg></Task>
      <Task bar={false}><svg viewBox="0 0 33 28" className="h-7 w-[33px]"><path d="M.5.5h32v27H.5z" fill="#000" stroke="#a8b0b4" /><path d="M1 1h31v2H1z" fill="#c8d0d4" /><path d="M1 3h31v6C16 8 6 14 4 24H1z" fill="#333" /><text x="3" y="12" fontSize="7" fill="#ddd" fontFamily="Liberation Mono">C:\_</text></svg></Task>
      <Task dim><svg viewBox="0 0 36 36" className="h-9 w-9"><rect width="36" height="36" rx="1.500" fill="#fbe300" /><ellipse cx="18" cy="16" rx="14" ry="11" fill="#391b1b" /><path d="M11 24l-1 8 8-6z" fill="#391b1b" /><text x="18" y="20" textAnchor="middle" fontSize="9.500" fontWeight="700" fill="#fbe300" fontFamily="Liberation Sans">TALK</text></svg></Task>
      <Task><svg viewBox="0 0 34 34" className="h-[33px] w-[33px]"><circle cx="17" cy="17" r="16.500" fill="#ffcd40" /><path d="M2.700 8.750A16.500 16.500 0 0131.300 8.750H17L9.900 21.100z" fill="#dd4b3e" /><path d="M2.700 8.750A16.500 16.500 0 0016 33.500L24.200 21.100H9.900z" fill="#1aa260" /><circle cx="17" cy="17" r="7.800" fill="#fff" /><circle cx="17" cy="17" r="6.300" fill="#4285f4" /></svg></Task>
      <Task bar={false}><svg viewBox="0 0 28 34" className="h-[34px] w-7"><path d="M2 11c4-12 20-12 24 0-6-6-18-6-24 0zM2 22c4 12 20 12 24 0-6 6-18 6-24 0z" fill="#f07828" /><circle cx="4" cy="31" r="2.200" fill="#888" /><circle cx="23" cy="3" r="1.800" fill="#777" /><circle cx="2" cy="5" r="1.200" fill="#777" /></svg></Task>
      <Task active>
        <svg viewBox="0 0 36 34" className="h-[34px] w-9">
          <path d="M4 6C14-2 30 1 34 14c3 11-6 19-16 19" stroke="#fff" strokeWidth="3.200" fill="none" />
          <path d="M1 17c0 8 7 17 17 17 7 0 13-4 15-8L23 13l-5 8-5-4-9 8-2-8z" fill="#fff" />
          <path d="M7 30l6-9 5-5" stroke="#5f6166" strokeWidth="1.500" fill="none" />
          <path d="M2 14a16 16 0 013-6" stroke="#fff" strokeWidth="2" fill="none" />
          <circle cx="12" cy="12" r="1.800" fill="#fff" />
        </svg>
      </Task>
      <Task><div className="relative"><svg viewBox="0 0 36 34" className="h-[34px] w-9"><path d="M0 11L18 0l18 11v8H0z" fill="#0f5fae" /><path d="M4 10h28v10L18 26 4 20z" fill="#f0f0f0" /><path d="M0 11l18 13v10H0z" fill="#28a8ea" /><path d="M36 11L18 24v10h18z" fill="#38bcf4" /><path d="M0 34l18-12 18 12z" fill="#1f90d8" /></svg><div className="absolute -bottom-[8px] -right-[13px] flex h-6 w-6 items-center justify-center rounded-full border border-[#999] bg-[#2b3844] font-['Open_Sans'] text-[16px] font-semibold text-white">1</div></div></Task>
      <Task><svg viewBox="0 0 36 36" className="h-9 w-9"><path d="M26 0l10 4v28l-10 4z" fill="#b078ec" /><path d="M26 0L3 25l-3-2V13l3-2 23 25V25L9 18 26 9z" fill="#7848c0" /><path d="M0 13v10l5-5z" fill="#5c34a0" /></svg></Task>
      <Task><svg viewBox="0 0 36 36" className="h-9 w-9" fill="none"><path d="M28 6C20-4 7 2 5 14c-2 10 6 21 20 20" stroke="#28a0d0" strokeWidth="4.500" /><path d="M28 7c8 7 9 17 3 26" stroke="#58b0d8" strokeWidth="1.500" /><rect x="0" y="12" width="11" height="11" rx="1.500" fill="#f88030" /><rect x="26" y="5" width="6" height="6" rx="1" fill="#f88030" /><rect x="28" y="26" width="7" height="8" rx="1" fill="#f88030" /></svg></Task>
      <Task bar={false}><svg viewBox="0 0 28 32" className="h-8 w-7"><path d="M0 7L18 0l10 3v26l-10 3L0 26l18 2V6L6 9v14l-6 3z" fill="#eb3c00" /></svg></Task>
      <Task><svg viewBox="0 0 32 32" className="h-8 w-8"><rect width="32" height="32" rx="1" fill="#2aa4ea" /><path d="M15 24l9-9 8 9v8H15z" fill="#6888d8" /><path d="M0 22l10-10 20 20H0z" fill="#0f4c90" /><circle cx="21" cy="8" r="3" fill="#fff" /></svg></Task>
      <Task><svg viewBox="0 0 35 34" className="h-[34px] w-[35px]"><path d="M2 3h33v31H2z" fill="#888" /><path d="M.5.5h31v30H.5z" fill="#c8c8c8" stroke="#111" strokeWidth="2" /><path d="M5 4h15M5 19h15M4 6v12M21 6v12" stroke="#222" strokeWidth="3" strokeDasharray="1.500 1.500" /><path d="M6.500 5.500h12v12h-12z" fill="#20e8f0" stroke="#066" /><path d="M22 5h8M22 9h6M28 2v8" stroke="#e02020" strokeWidth="2" /><path d="M26 29V19h5" stroke="#2020e0" strokeWidth="1.500" fill="none" /><path d="M15 17l9 5-3 1 3 5-3 2-3-5-2 3z" fill="#000" /></svg></Task>
      <Task><AppIcon cls="h-[36px] w-[36px]" /></Task>
      <div className="ml-auto flex items-center text-white">
        <svg viewBox="0 0 190 40" className="h-10 w-[190px]" fill="none" stroke="#fff" strokeWidth="1.400">
          <path d="M2 25l8.500-9 8.500 9" />
          <path d="M40 28a5 5 0 01-1-9 8 8 0 0114-2 6 6 0 016 11z" fill="#a8a8a8" stroke="none" /><path d="M39 29a5 5 0 011-9l6 1 6-3 6 3a4 4 0 01-1 8z" fill="#fff" stroke="none" />
          <path d="M80.500 14.500h16v11h-16zM98 17v5" /><path d="M82 16h13v8H82z" fill="#fff" /><path d="M75 11v4M80 11v4M73.500 15h8v3l-2 3h-4l-2-3zM77.500 21v5h4" />
          <path d="M113 30c0-11 7-18 17-18M118 30c0-7 5-13 12-13M123 30c0-4 3-8 7-8" strokeWidth="1.300" /><circle cx="129" cy="28" r="2" fill="#fff" stroke="none" />
          <path d="M146 17h4l5-5v18l-5-5h-4zM158 18c2 2 2 5 0 7M161 15c4 4 4 9 0 12M164 12c5 5 5 12 0 17" strokeWidth="1.200" />
        </svg>
        <span className="-ml-[12px] w-[24px] font-['Open_Sans'] text-[30px] leading-none">A</span>
        <div className="ml-[11px] flex w-[98px] flex-col items-center whitespace-nowrap pt-[2px] font-['Open_Sans','Noto_Sans_CJK_KR',sans-serif] text-[17.500px] leading-[28px] tracking-[-0.4px]">
          <span>오전 7:40</span>
          <span>2020-04-29</span>
        </div>
        <div className="relative ml-[26px] mr-[31px] h-[26px] w-[24px]">
          <svg viewBox="0 0 24 26" className="h-[26px] w-6"><path d="M0 1h24v18H10l-5 6v-6H0z" fill="#fff" /><path d="M5 6h14M5 10h14M5 14h9" stroke="#333" strokeWidth="1.300" /></svg>
          <div className="absolute left-[8px] top-[11px] flex h-[26px] w-[31px] items-center justify-center rounded-full border border-[#888] bg-[#3a3a42] font-['Open_Sans'] text-[17px] font-bold">11</div>
        </div>
        <div className="mr-[6px] h-full w-px bg-[#8a8a92]" />
      </div>
    </div>
  );
}

export default function App() {
  return (
    <div className="h-[1080px] w-[1920px] overflow-hidden bg-white">
      <Header />
      <Toolbars />
      <MdiArea />
      <div className="h-px bg-[#a8a8a8]" />
      <Docks />
      <Taskbar />
    </div>
  );
}
